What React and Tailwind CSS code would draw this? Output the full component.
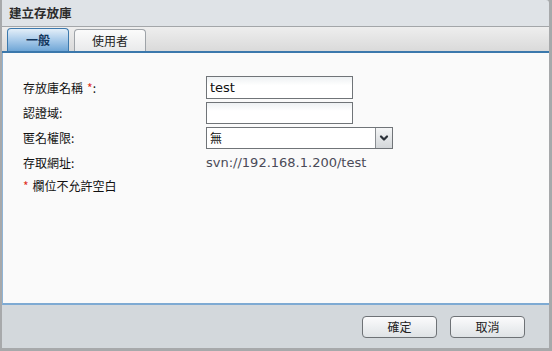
import { ChevronDown } from 'lucide-react'

const CJK = { fontFamily: '"Noto Sans CJK TC", "DejaVu Sans", sans-serif' }
const LATIN = { fontFamily: '"DejaVu Sans", "Noto Sans CJK TC", sans-serif' }

function Row({ label, req, children }) {
  return (
    <div className="flex items-center h-[25px]">
      <div className="w-[183px] text-[12px] text-[#111]" style={CJK}>
        {label}
        {req && <span className="text-[#e0301e] ml-[4px]">*</span>}
        :
      </div>
      {children}
    </div>
  )
}

export default function App() {
  return (
    <div className="w-[552px] h-[351px] bg-[#a7a9ab] pl-[2px] pr-[3px] pb-[3px] flex flex-col">
      {/* title */}
      <div className="h-[27px] shrink-0 bg-[#dfe3e7] border-b border-[#a3a6a9] rounded-tr-[3px] flex items-center pl-[7px]">
        <span className="text-[12.5px] font-bold text-[#2b2b2b]" style={CJK}>建立存放庫</span>
      </div>
      {/* tabs */}
      <div className="h-[26px] shrink-0 bg-gradient-to-b from-[#eeeeee] to-[#dadada] border-b-2 border-[#3b78ac] flex items-end pl-[5px] gap-[5px]">
        <div className="w-[62px] h-[23px] rounded-t-[4px] border border-b-0 border-[#3c79ad] bg-gradient-to-b from-[#e3eef8] via-[#a9cbea] to-[#6fa6d6] flex items-center justify-center">
          <span className="text-[12px] font-bold text-[#12375e]" style={CJK}>一般</span>
        </div>
        <div className="w-[72px] h-[22px] rounded-t-[4px] border border-b-0 border-[#9ea3a8] bg-gradient-to-b from-[#fbfbfb] to-[#e9eaeb] flex items-center justify-center">
          <span className="text-[12px] text-[#222]" style={CJK}>使用者</span>
        </div>
      </div>
      {/* content */}
      <div className="flex-1 bg-[#fafafa] border-l border-[#8fb4d6] border-b-2 border-b-[#7eaad3] pl-[20px] pt-[22px]">
        <Row label="存放庫名稱" req>
          <div className="w-[147px] h-[23px] border border-[#707478] bg-gradient-to-b from-[#eef1f3] to-white to-[40%] flex items-center pl-[3px] text-[13px] text-[#111]" style={LATIN}>test</div>
        </Row>
        <Row label="認證域">
          <div className="w-[147px] h-[22px] border border-[#707478] bg-gradient-to-b from-[#eef1f3] to-white to-[40%]" />
        </Row>
        <Row label="匿名權限">
          <div className="w-[187px] h-[22px] border border-[#707478] flex bg-white">
            <div className="flex-1 flex items-center pl-[3px] text-[12px] text-[#111]" style={CJK}>無</div>
            <div className="w-[17px] border-l border-[#8a8e92] bg-gradient-to-b from-[#f4f5f6] to-[#d4d7da] flex items-center justify-center">
              <ChevronDown size={12} strokeWidth={4.5} className="text-[#2a3038]" />
            </div>
          </div>
        </Row>
        <Row label="存取網址">
          <span className="text-[13px] text-[#4a4a58]" style={LATIN}>svn://192.168.1.200/test</span>
        </Row>
        <div className="flex items-center h-[22px] text-[12px] text-[#111]" style={CJK}>
          <span className="text-[#e0301e] mr-[4px]">*</span>欄位不允許空白
        </div>
      </div>
      {/* footer */}
      <div className="h-[43px] shrink-0 bg-[#d3d8dc] flex items-center justify-end gap-[13px] pr-[24px] pt-[1px]">
        <button className="w-[75px] h-[22px] rounded-[4px] border border-[#6e7276] bg-gradient-to-b from-[#fbfbfc] to-[#dfe3e6] text-[12px] text-[#222]" style={CJK}>確定</button>
        <button className="w-[75px] h-[22px] rounded-[4px] border border-[#6e7276] bg-gradient-to-b from-[#fbfbfc] to-[#dfe3e6] text-[12px] text-[#222]" style={CJK}>取消</button>
      </div>
    </div>
  )
}
